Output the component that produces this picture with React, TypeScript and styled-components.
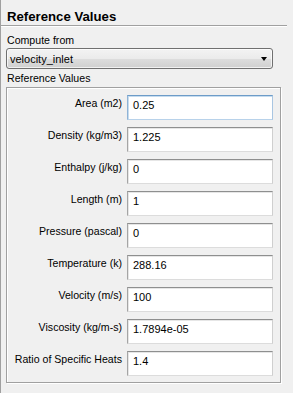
import React from 'react';
import styled, { createGlobalStyle } from 'styled-components';

const GlobalStyle = createGlobalStyle`
  html, body {
    margin: 0;
    padding: 0;
    background: #f0f0f0;
  }
  body {
    font-family: "Liberation Sans", Arial, sans-serif;
    color: #000;
  }
`;

const Panel = styled.div`
  width: 293px;
  height: 393px;
  box-sizing: border-box;
  border-left: 1px solid #a0a0a0;
  background: #f0f0f0;
  font-size: 10.6px;
`;

const Title = styled.h2`
  margin: 0 6px 0 0;
  height: 26px;
  box-sizing: border-box;
  padding: 10px 0 0 6px;
  font-size: 13.2px;
  line-height: 14px;
  font-weight: bold;
  border-bottom: 1px solid #a0a0a0;
  box-shadow: 0 1px 0 #fff;
`;

const Caption = styled.div<{ $top: number }>`
  margin: ${(p) => p.$top}px 0 0 6px;
  line-height: 13px;
  height: 13px;
`;

const Select = styled.div`
  margin: 1px 0 0 5px;
  width: 267px;
  height: 21px;
  box-sizing: border-box;
  border: 1px solid #707070;
  border-radius: 3px;
  background: linear-gradient(#f3f3f3 0%, #ebebeb 50%, #dddddd 51%, #cfcfcf 100%);
  box-shadow: inset 0 0 0 1px rgba(255, 255, 255, 0.7);
  display: flex;
  align-items: center;
  justify-content: space-between;
  padding: 0 5px 0 3px;
  font-size: 11px;
`;

const Arrow = styled.span`
  width: 0;
  height: 0;
  border-left: 3.5px solid transparent;
  border-right: 3.5px solid transparent;
  border-top: 4px solid #000;
  margin-top: 1px;
`;

const Group = styled.div`
  margin: 2px 0 0 5px;
  width: 275px;
  height: 296px;
  box-sizing: border-box;
  border: 1px solid #a0a0a0;
  box-shadow: inset 1px 1px 0 #fff, 1px 1px 0 #fff;
  padding: 7px 6px 0 0;
  display: grid;
  grid-template-columns: 115px 146px;
  column-gap: 5px;
  row-gap: 7px;
  grid-auto-rows: 25px;
`;

const Label = styled.label`
  text-align: right;
  line-height: 13px;
  padding-top: 2px;
  white-space: nowrap;
`;

const Field = styled.div<{ $focused?: boolean }>`
  box-sizing: border-box;
  height: 25px;
  background: #fff;
  border: 1px solid;
  border-color: ${(p) =>
    p.$focused ? '#6d9cc8 #a9c6e2 #b8d2ea #8fb3d6' : '#8e8f8f #cfcfcf #dcdcdc #a5a5a5'};
  box-shadow: inset 1px 1px 0 ${(p) => (p.$focused ? '#c6dcef' : '#e6e6e6')};
  padding: 3px 5px 0 5px;
  line-height: 13px;
  font-size: 11px;
`;

const values: [string, string][] = [
  ['Area (m2)', '0.25'],
  ['Density (kg/m3)', '1.225'],
  ['Enthalpy (j/kg)', '0'],
  ['Length (m)', '1'],
  ['Pressure (pascal)', '0'],
  ['Temperature (k)', '288.16'],
  ['Velocity (m/s)', '100'],
  ['Viscosity (kg/m-s)', '1.7894e-05'],
  ['Ratio of Specific Heats', '1.4'],
];

const App: React.FC = () => {
  return (
    <>
      <GlobalStyle />
      <Panel>
        <Title>Reference Values</Title>
        <Caption $top={8}>Compute from</Caption>
        <Select>
          <span>velocity_inlet</span>
          <Arrow />
        </Select>
        <Caption $top={3}>Reference Values</Caption>
        <Group>
          {values.map(([label, value], i) => (
            <React.Fragment key={label}>
              <Label>{label}</Label>
              <Field $focused={i === 0}>{value}</Field>
            </React.Fragment>
          ))}
        </Group>
      </Panel>
    </>
  );
};

export default App;
